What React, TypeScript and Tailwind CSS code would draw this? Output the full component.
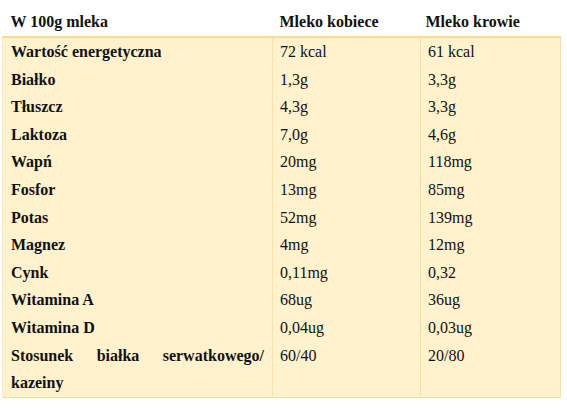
const rows: [string, string, string][] = [
  ['Wartość energetyczna', '72 kcal', '61 kcal'],
  ['Białko', '1,3g', '3,3g'],
  ['Tłuszcz', '4,3g', '3,3g'],
  ['Laktoza', '7,0g', '4,6g'],
  ['Wapń', '20mg', '118mg'],
  ['Fosfor', '13mg', '85mg'],
  ['Potas', '52mg', '139mg'],
  ['Magnez', '4mg', '12mg'],
  ['Cynk', '0,11mg', '0,32'],
  ['Witamina A', '68ug', '36ug'],
  ['Witamina D', '0,04ug', '0,03ug'],
  ['Stosunek białka serwatkowego/ kazeiny', '60/40', '20/80'],
]

export default function App() {
  return (
    <div className="bg-white w-[567px] h-[409px] pl-[2px] font-['Liberation_Serif',serif] text-[16px] text-[#111]">
      <table className="w-[558px] border-collapse table-fixed">
        <colgroup>
          <col className="w-[270px]" />
          <col className="w-[148px]" />
          <col className="w-[140px]" />
        </colgroup>
        <thead>
          <tr className="h-[37px] border-b-2 border-[#f5dc8e]">
            <th className="text-left font-bold px-[8px] pt-[7px]">W 100g mleka</th>
            <th className="text-left font-bold px-[7px] pt-[7px]">Mleko kobiece</th>
            <th className="text-left font-bold px-[5px] pt-[7px]">Mleko krowie</th>
          </tr>
        </thead>
        <tbody className="bg-[#fff2cc]">
          {rows.map(([name, a, b], i) => (
            <tr
              key={i}
              className={i === rows.length - 1 ? 'border-b border-[#f0dc9c]' : ''}
            >
              <td className="align-top font-bold px-[8px] leading-[27.6px] text-justify border-l border-[#fbeab8]">
                {name}
              </td>
              <td className="align-top px-[7px] leading-[27.6px] border-l border-[#f6e2a4]">{a}</td>
              <td className="align-top px-[7px] leading-[27.6px] border-l border-r border-[#f6e2a4]">{b}</td>
            </tr>
          ))}
        </tbody>
      </table>
    </div>
  )
}
